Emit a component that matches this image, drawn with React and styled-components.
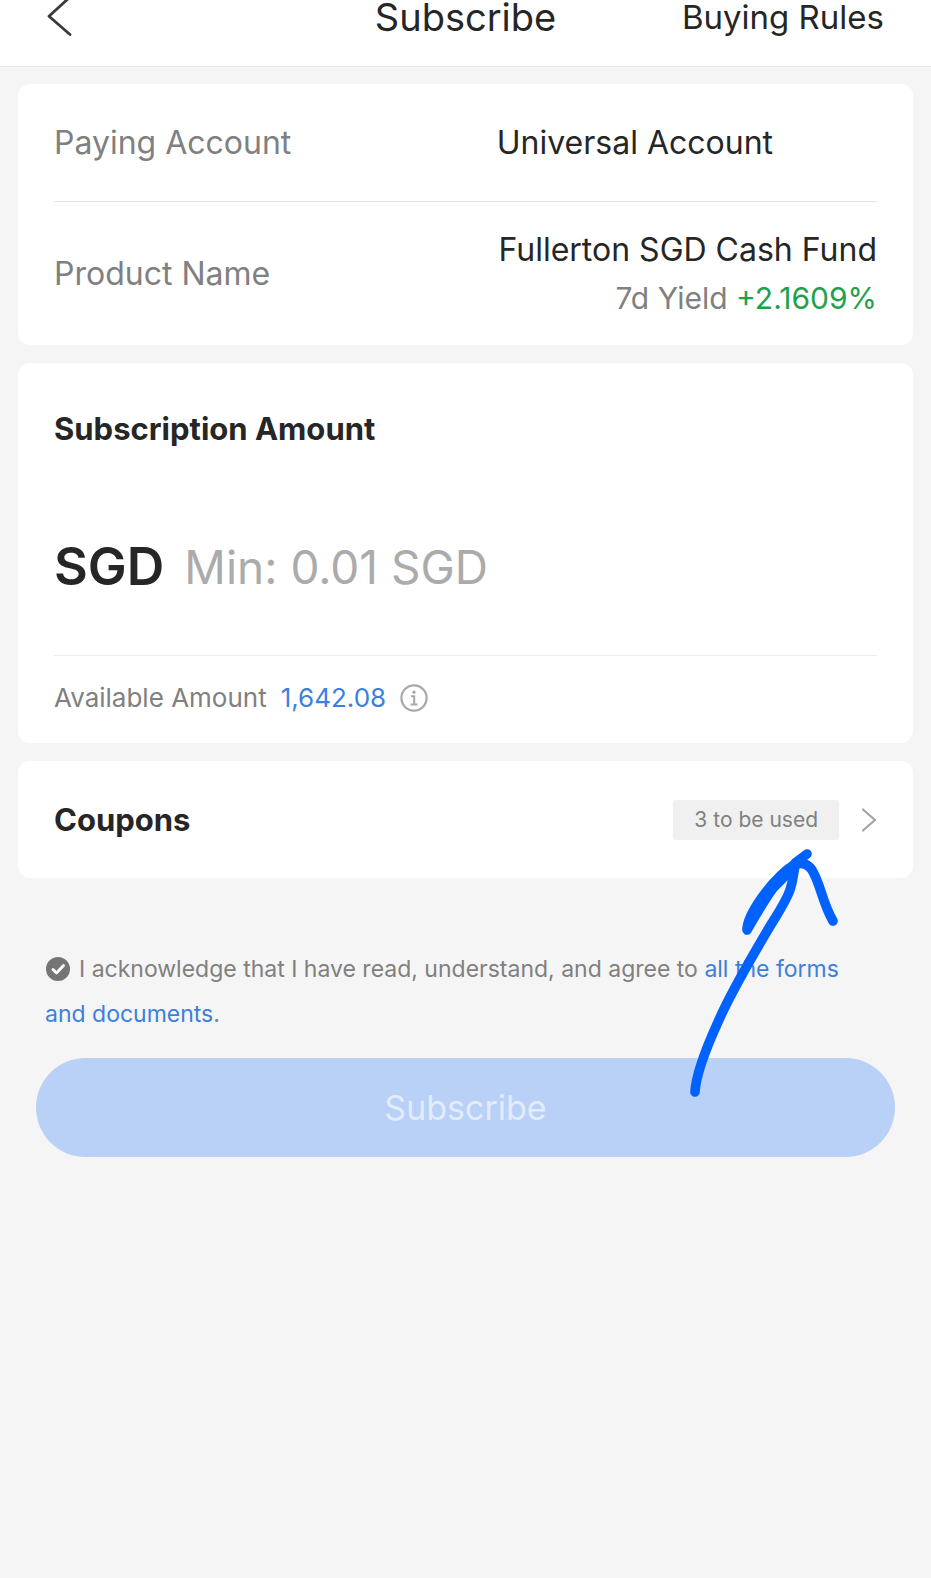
import React from "react";
import styled, { createGlobalStyle } from "styled-components";

const GlobalStyle = createGlobalStyle`
  * { box-sizing: border-box; }
  body {
    margin: 0;
    background: #f5f5f5;
    color: #262626;
    font-family: Inter, "Liberation Sans", sans-serif;
    font-size: 32px;
  }
  button, input { font: inherit; color: inherit; }
  h1, h2, p, dl, dt, dd { margin: 0; }
`;

const Header = styled.header`
  display: grid;
  grid-template-columns: 1fr auto 1fr;
  align-items: start;
  padding: 0 47px 30px;
  background: #fff;
  border-bottom: 1px solid #e6e6e6;
  line-height: 34px;
`;

const IconButton = styled.button`
  display: flex;
  padding: 0;
  border: 0;
  background: none;
  cursor: pointer;
`;

const Title = styled.h1`
  font-size: 38px;
  font-weight: 400;
`;

const HeaderLink = styled.a`
  justify-self: end;
  font-size: 33px;
  color: inherit;
  text-decoration: none;
`;

const Main = styled.main`
  display: flex;
  flex-direction: column;
  gap: 18px;
  padding: 17px 18px;
`;

const Card = styled.section`
  position: relative;
  padding: 0 36px;
  border-radius: 12px;
  background: #fff;
`;

const Details = styled.dl``;

const DetailRow = styled.div`
  display: flex;
  align-items: center;
  justify-content: space-between;
  padding: ${(p) => (p.$tall ? "24px 0 23px" : "35px 0 34px")};
  line-height: 48px;

  & + & { border-top: 1px solid #e8e8e8; }
`;

const Term = styled.dt`
  color: #808080;
`;

const Value = styled.dd`
  text-align: right;
  padding-right: ${(p) => (p.$masked ? "104px" : "0")};
`;

const Yield = styled.div`
  font-size: 30px;
  color: #808080;
`;

const Gain = styled.span`
  color: #1fa14b;
`;

const Heading = styled.h2`
  font-size: 31px;
  font-weight: 700;
  line-height: 48px;
`;

const AmountHeading = styled(Heading)`
  padding-top: 42px;
`;

const AmountField = styled.div`
  display: flex;
  align-items: center;
  gap: 20px;
  padding: 78px 0 52px;
  border-bottom: 1px solid #ececec;
`;

const Currency = styled.label`
  font-size: 52px;
  font-weight: 600;
  line-height: 72px;
`;

const AmountInput = styled.input`
  flex: 1;
  min-width: 0;
  height: 72px;
  padding: 0;
  border: 0;
  outline: 0;
  background: none;
  font-size: 46px;

  &::placeholder { color: #ababab; opacity: 1; }
`;

const Available = styled.div`
  display: flex;
  align-items: center;
  gap: 14px;
  padding: 24px 0 27px;
  font-size: 26px;
  line-height: 36px;
  color: #808080;
`;

const Balance = styled.span`
  color: #3d7fde;
`;

const CouponRow = styled.button`
  display: flex;
  align-items: center;
  justify-content: space-between;
  width: 100%;
  padding: 35px 0 34px;
  border: 0;
  background: none;
  text-align: left;
  cursor: pointer;
`;

const CouponStatus = styled.span`
  display: flex;
  align-items: center;
  gap: 22px;
`;

const Badge = styled.span`
  padding: 0 21px;
  border-radius: 3px;
  background: #f0f0f0;
  color: #808080;
  font-size: 21px;
  line-height: 40px;
`;

const Pointer = styled.svg`
  position: absolute;
  z-index: 1;
  top: 79px;
  right: 73px;
  pointer-events: none;
`;

const Footer = styled.div`
  padding: 51px 18px 0;
`;

const Agreement = styled.p`
  padding: 0 36px 21px 9px;
  color: #808080;
  font-size: 23px;
  line-height: 45px;
`;

const CheckBox = styled.span`
  position: relative;
  display: inline-block;
  width: 26px;
  height: 24px;
  margin-right: 8px;
  vertical-align: -4px;

  svg {
    position: absolute;
    inset: 0;
    pointer-events: none;
  }
`;

const CheckInput = styled.input`
  display: block;
  appearance: none;
  width: 24px;
  height: 24px;
  margin: 0 1px;
  border: 2px solid #757575;
  border-radius: 50%;

  &:checked { background: #757575; }
  &:not(:checked) + svg { display: none; }
`;

const TextLink = styled.a`
  color: #3d7fde;
  text-decoration: none;
`;

const SubmitButton = styled.button`
  display: block;
  width: 100%;
  padding: 0;
  border: 0;
  border-radius: 50px;
  background: #b9d0f7;
  color: #e2ecfd;
  font-size: 34px;
  line-height: 99px;
`;

export default function App() {
  return (
    <>
      <GlobalStyle />
      <Header>
        <IconButton type="button" aria-label="Back">
          <svg width="26" height="36" viewBox="0 0 26 36" fill="none" stroke="#3a3a3a" strokeWidth="2.8" strokeLinecap="round" strokeLinejoin="round">
            <path d="M23-3 2 16.3 23 34.5" />
          </svg>
        </IconButton>
        <Title>Subscribe</Title>
        <HeaderLink href="#rules">Buying Rules</HeaderLink>
      </Header>
      <Main>
        <Card>
          <Details>
            <DetailRow>
              <Term>Paying Account</Term>
              <Value $masked>Universal Account</Value>
            </DetailRow>
            <DetailRow $tall>
              <Term>Product Name</Term>
              <Value>
                Fullerton SGD Cash Fund
                <Yield>7d Yield <Gain>+2.1609%</Gain></Yield>
              </Value>
            </DetailRow>
          </Details>
        </Card>
        <Card>
          <AmountHeading>Subscription Amount</AmountHeading>
          <AmountField>
            <Currency htmlFor="amount">SGD</Currency>
            <AmountInput id="amount" inputMode="decimal" placeholder="Min: 0.01 SGD" />
          </AmountField>
          <Available>
            <span>Available Amount</span>
            <Balance>1,642.08</Balance>
            <IconButton type="button" aria-label="About the available amount">
              <svg width="28" height="28" viewBox="0 0 28 28" fill="none" stroke="#a8a8a8" strokeWidth="2">
                <circle cx="14" cy="14" r="12.6" strokeWidth="2.2" />
                <path d="M11 12.2h3.2v8M10.5 20.5h7" />
                <circle cx="14" cy="8.2" r="1.6" fill="#a8a8a8" stroke="none" />
              </svg>
            </IconButton>
          </Available>
        </Card>
        <Card>
          <CouponRow type="button">
            <Heading as="span">Coupons</Heading>
            <CouponStatus>
              <Badge>3 to be used</Badge>
              <svg width="16" height="26" viewBox="0 0 16 26" fill="none" stroke="#a3a3a3" strokeWidth="2.2" strokeLinecap="round" strokeLinejoin="round">
                <path d="M2 2.5 14 13 2 23.5" />
              </svg>
            </CouponStatus>
          </CouponRow>
          <Pointer width="160" height="270" viewBox="0 0 160 270" fill="none" stroke="#0062fe" strokeWidth="9.6" strokeLinecap="round" strokeLinejoin="round" aria-hidden="true">
            <path d="M15 252C16 232 28 204 38 182 52 150 72 117 86 93 94 79 105 64 110 50 114 38 113 32 116 23" />
            <path d="M67 90C67 74 93 38 115 24L106 35 94 47C86 57 77 73 67 90Z" fill="#0062fe" />
            <path d="M115 23 127 14M116 24C123 22 128 24 132 30 141 45 142 62 153 81" />
          </Pointer>
        </Card>
        <Footer>
          <Agreement>
            <CheckBox>
              <CheckInput id="agree" type="checkbox" defaultChecked />
              <svg width="26" height="24" viewBox="0 0 26 24" fill="none" stroke="#fff" strokeWidth="2.8" strokeLinecap="round" strokeLinejoin="round">
                <path d="M8 12.5 11.5 16 18.5 8.5" />
              </svg>
            </CheckBox>
            <label htmlFor="agree">I acknowledge that I have read, understand, and agree to </label>
            <TextLink href="#documents">all the forms and documents</TextLink>.
          </Agreement>
          <SubmitButton type="submit" disabled>Subscribe</SubmitButton>
        </Footer>
      </Main>
    </>
  );
}
